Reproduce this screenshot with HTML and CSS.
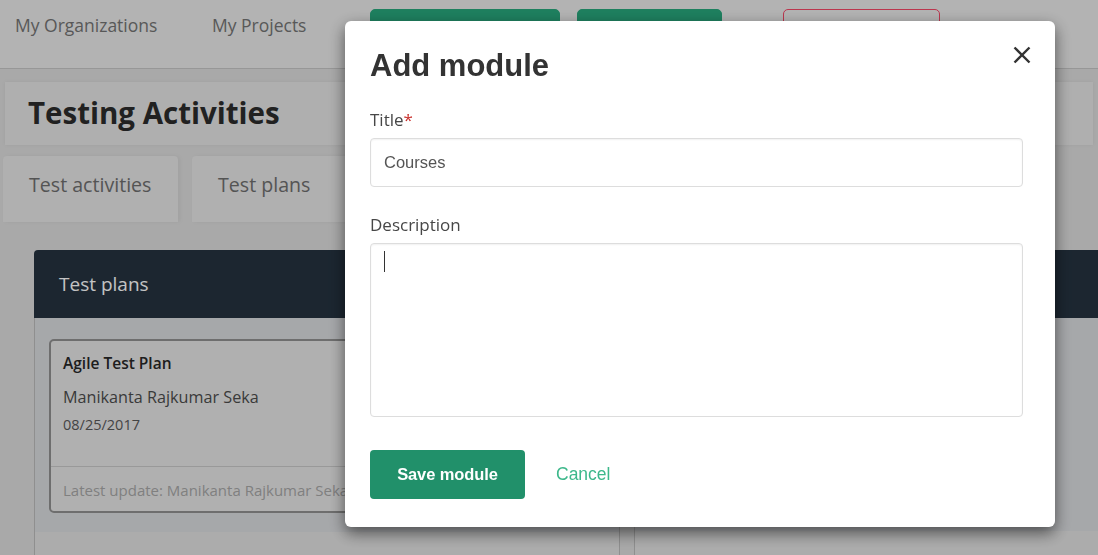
FILE: index.html
```html
<!DOCTYPE html>
<html lang="en">
<head>
<meta charset="utf-8">
<title>Testing Activities – Add module</title>
<link rel="stylesheet" href="styles.css">
</head>
<body>
<div class="app">
  <header class="topnav">
    <a class="nav-link nav-link--orgs">My Organizations</a>
    <a class="nav-link nav-link--projects">My Projects</a>
    <button class="top-btn top-btn--green top-btn--wide" aria-label="New test activity"></button>
    <button class="top-btn top-btn--green top-btn--mid" aria-label="New test plan"></button>
    <button class="top-btn top-btn--outline" aria-label="Delete"></button>
  </header>

  <main class="page">
    <section class="page-title">
      <h1>Testing Activities</h1>
    </section>

    <nav class="tabs">
      <div class="tab tab--first">Test activities</div>
      <div class="tab tab--second">Test plans</div>
    </nav>

    <div class="tab-content">
      <div class="panels">
        <section class="panel">
          <div class="panel-head">Test plans</div>
          <div class="panel-list">
            <article class="plan-card">
              <div class="plan-body">
                <div class="plan-title">Agile Test Plan</div>
                <div class="plan-owner">Manikanta Rajkumar Seka</div>
                <div class="plan-date">08/25/2017</div>
              </div>
              <div class="plan-foot">Latest update: Manikanta Rajkumar Seka</div>
            </article>
          </div>
          <div class="panel-rest"></div>
        </section>

        <section class="panel">
          <div class="panel-head">Modules</div>
          <div class="panel-list panel-list--empty"></div>
          <div class="panel-rest"></div>
        </section>
      </div>
    </div>
  </main>
</div>

<div class="overlay">
  <div class="modal" role="dialog" aria-labelledby="modal-title">
    <div class="modal-header">
      <h2 class="modal-title" id="modal-title">Add module</h2>
      <button class="modal-close" aria-label="Close">
        <svg width="18" height="18" viewBox="0 0 18 18" aria-hidden="true">
          <path d="M1.5 1.5 L16.5 16.5 M16.5 1.5 L1.5 16.5" stroke="#333" stroke-width="2.4" stroke-linecap="butt" fill="none"/>
        </svg>
      </button>
    </div>
    <form class="modal-form">
      <label class="field-label" for="module-title">Title<span class="req">*</span></label>
      <input class="field-input" id="module-title" type="text" value="Courses">

      <label class="field-label field-label--desc" for="module-desc">Description</label>
      <div class="textarea-wrap">
        <textarea class="field-textarea" id="module-desc"></textarea>
        <span class="caret"></span>
      </div>

      <div class="modal-actions">
        <button type="button" class="btn-save">Save module</button>
        <button type="button" class="btn-cancel">Cancel</button>
      </div>
    </form>
  </div>
</div>
</body>
</html>
```

FILE: styles.css
```css
* {
  box-sizing: border-box;
}

html,
body {
  margin: 0;
  padding: 0;
}

body {
  width: 1098px;
  height: 555px;
  overflow: hidden;
  position: relative;
  background: #d4d4d4;
  font-family: "Open Sans", "Liberation Sans", sans-serif;
}

.app {
  width: 1098px;
  height: 555px;
  overflow: hidden;
}

/* ---------- top navigation ---------- */
.topnav {
  height: 69px;
  background: #e0e0e0;
  border-bottom: 1px solid #bdbdbd;
  display: flex;
  align-items: flex-start;
  padding: 9px 0 0 15px;
}

.nav-link {
  font-size: 17.5px;
  line-height: 32px;
  color: #6f6f6f;
  white-space: nowrap;
}

.nav-link--orgs {
  width: 197px;
}

.nav-link--projects {
  width: 158px;
}

.top-btn {
  height: 34px;
  border-radius: 5px;
  border-width: 1px;
  border-style: solid;
  padding: 0;
  background: transparent;
}

.top-btn--green {
  background: #26a077;
  border-color: #26a077;
}

.top-btn--wide {
  width: 190px;
  margin-right: 17px;
}

.top-btn--mid {
  width: 145px;
  margin-right: 61px;
}

.top-btn--outline {
  width: 157px;
  border-color: #ea4462;
  background: transparent;
}

/* ---------- page ---------- */
.page-title {
  margin: 13px 5px 0;
  background: #dbdbdb;
  padding: 13px 23px 15px;
  box-shadow: 0 0 4px rgba(0, 0, 0, 0.06);
}

.page-title h1 {
  margin: 0;
  font-size: 29.5px;
  line-height: 35px;
  font-weight: 700;
  color: #2a2a2a;
}

.tabs {
  display: flex;
  gap: 14px;
  margin-top: 11px;
  padding-left: 3px;
}

.tab {
  height: 66px;
  padding: 15px 26px 0;
  background: #dcdcdc;
  border-radius: 4px 4px 0 0;
  font-size: 19.6px;
  line-height: 28px;
  color: #6a6a6a;
  white-space: nowrap;
  box-shadow: 2px 0 4px rgba(0, 0, 0, 0.05);
}

.tab--first {
  width: 175px;
}

.tab--second {
  width: 170px;
}

.tab-content {
  padding: 28px 0 0 34px;
}

.panels {
  display: grid;
  grid-template-columns: 586px 586px;
  gap: 14px;
}

.panel-head {
  height: 68px;
  background: #23303d;
  border-radius: 4px 4px 0 0;
  color: #f4f4f4;
  font-size: 19px;
  line-height: 68px;
  padding-left: 25px;
}

.panel-list {
  background: #d0d2d5;
  border-left: 1px solid #b3b3b3;
  border-right: 1px solid #b3b3b3;
  padding: 21px 14px 19px;
}

.panel-list--empty {
  height: 213px;
}

.panel-rest {
  height: 60px;
  background: #d8d8d8;
  border-left: 1px solid #b3b3b3;
  border-right: 1px solid #b3b3b3;
}

.plan-card {
  border: 2px solid #8a8a8a;
  border-radius: 5px;
  background: #dddddd;
}

.plan-body {
  padding: 12px 12px 31px;
}

.plan-title {
  font-size: 15.5px;
  line-height: 21px;
  font-weight: 600;
  color: #262626;
}

.plan-owner {
  margin-top: 12px;
  font-size: 16.2px;
  line-height: 22px;
  color: #494949;
}

.plan-date {
  margin-top: 6px;
  font-size: 14.5px;
  line-height: 21px;
  color: #555555;
}

.plan-foot {
  border-top: 1px solid #c0c0c0;
  padding: 13px 12px 10px;
  font-size: 15px;
  line-height: 21px;
  color: #a0a0a0;
  white-space: nowrap;
  overflow: hidden;
}

/* ---------- modal ---------- */
.overlay {
  position: fixed;
  inset: 0;
  background: rgba(0, 0, 0, 0.2);
}

.modal {
  margin: 21px 0 0 345px;
  width: 710px;
  background: #ffffff;
  border-radius: 6px;
  box-shadow: 0 6px 16px rgba(0, 0, 0, 0.55);
  padding: 25px 32px 28px 25px;
}

.modal-header {
  display: flex;
  justify-content: space-between;
  align-items: flex-start;
}

.modal-title {
  margin: 3px 0 0;
  font-family: "Liberation Sans", Arial, sans-serif;
  font-weight: 700;
  font-size: 31px;
  line-height: 34px;
  color: #333333;
}

.modal-close {
  width: 18px;
  height: 18px;
  margin-right: -8px;
  padding: 0;
  border: 0;
  background: transparent;
  display: block;
}

.modal-close svg {
  display: block;
}

.modal-form {
  display: block;
}

.field-label {
  display: block;
  margin-top: 25px;
  font-size: 17px;
  line-height: 24px;
  color: #474747;
}

.field-label--desc {
  margin-top: 26px;
}

.req {
  color: #c9302c;
}

.field-input {
  display: block;
  width: 100%;
  height: 49px;
  margin-top: 6px;
  padding: 0 13px;
  border: 1px solid #dddddd;
  border-radius: 4px;
  box-shadow: inset 0 1px 2px rgba(0, 0, 0, 0.06);
  font-family: "Liberation Sans", Arial, sans-serif;
  font-size: 16.5px;
  color: #555555;
  outline: none;
}

.textarea-wrap {
  position: relative;
  margin-top: 6px;
  height: 174px;
}

.field-textarea {
  display: block;
  width: 100%;
  height: 100%;
  resize: none;
  padding: 8px 13px;
  border: 1px solid #dddddd;
  border-radius: 4px;
  box-shadow: inset 0 1px 2px rgba(0, 0, 0, 0.06);
  font-family: "Liberation Sans", Arial, sans-serif;
  font-size: 16px;
  color: #555555;
  outline: none;
}

.caret {
  position: absolute;
  left: 14px;
  top: 8px;
  width: 1px;
  height: 21px;
  background: #333333;
}

.modal-actions {
  display: flex;
  align-items: center;
  margin-top: 33px;
}

.btn-save {
  width: 155px;
  height: 49px;
  border: 0;
  border-radius: 4px;
  background: #21906a;
  color: #ffffff;
  font-family: "Liberation Sans", Arial, sans-serif;
  font-weight: 700;
  font-size: 16.5px;
  letter-spacing: -0.1px;
  padding: 0;
}

.btn-cancel {
  margin-left: 31px;
  padding: 0;
  border: 0;
  background: transparent;
  color: #3db88b;
  font-family: "Liberation Sans", Arial, sans-serif;
  font-size: 17.5px;
}
```
